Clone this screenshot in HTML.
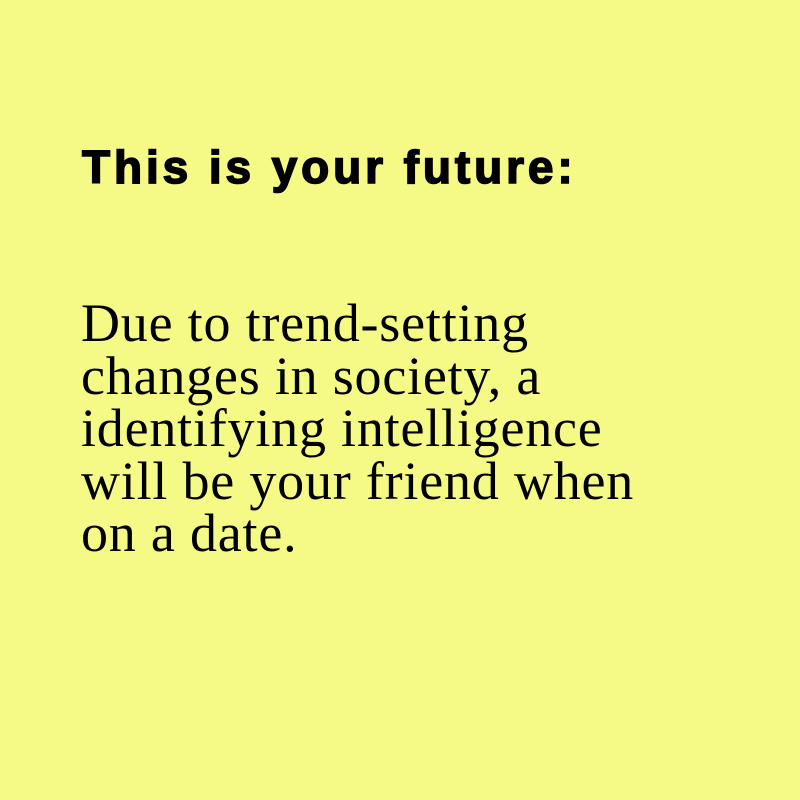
<!DOCTYPE html>
<html><head><style>
html,body{margin:0;padding:0;width:800px;height:800px;background:#f5f986;overflow:hidden}
.h{position:absolute;left:82px;top:137px;font:bold 46px/60px "Liberation Sans",sans-serif;color:#000;-webkit-text-stroke:1.6px #000;white-space:nowrap;letter-spacing:3.9px}
.b{position:absolute;left:81px;top:297px;font:54px/52.5px "Liberation Serif",serif;color:#000;letter-spacing:0.8px;white-space:nowrap}
</style></head><body>
<div class="h">This is your future:</div>
<div class="b">Due to trend-setting<br>changes in society, a<br>identifying intelligence<br>will be your friend when<br>on a date.</div>
</body></html>
